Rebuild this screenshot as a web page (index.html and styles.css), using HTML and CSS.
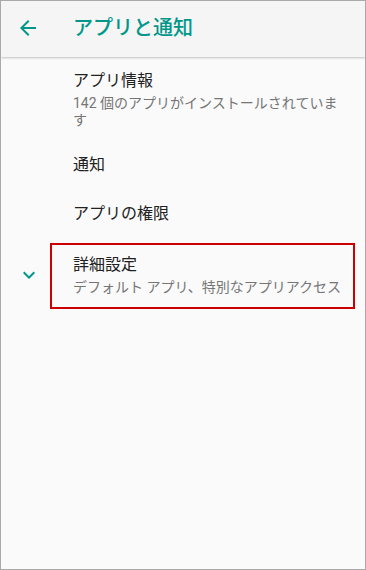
FILE: index.html
```html
<!DOCTYPE html>
<html lang="ja">
<head>
<meta charset="utf-8">
<title>アプリと通知</title>
<link rel="stylesheet" href="styles.css">
</head>
<body>
<div class="screen">
  <header class="appbar">
    <div class="nav-icon">
      <svg viewBox="0 0 24 24" width="24" height="24"><path d="M20 11H7.83l5.59-5.59L12 4l-8 8 8 8 1.41-1.41L7.83 13H20v-2z"/></svg>
    </div>
    <h1 class="appbar-title">アプリと通知</h1>
  </header>
  <ul class="list">
    <li class="item item-two">
      <div class="item-icon"></div>
      <div class="item-text">
        <div class="item-title">アプリ情報</div>
        <div class="item-sub">142 個のアプリがインストールされています</div>
      </div>
    </li>
    <li class="item">
      <div class="item-icon"></div>
      <div class="item-text">
        <div class="item-title">通知</div>
      </div>
    </li>
    <li class="item">
      <div class="item-icon"></div>
      <div class="item-text">
        <div class="item-title">アプリの権限</div>
      </div>
    </li>
    <li class="item item-adv">
      <div class="item-icon">
        <svg viewBox="0 0 24 24" width="24" height="24"><path d="M16.59 8.59L12 13.17 7.41 8.59 6 10l6 6 6-6z"/></svg>
      </div>
      <div class="item-text">
        <div class="item-title">詳細設定</div>
        <div class="item-sub">デフォルト アプリ、特別なアプリアクセス</div>
      </div>
      <div class="highlight"></div>
    </li>
  </ul>
</div>
</body>
</html>
```
FILE: styles.css
```css
* { box-sizing: border-box; }
html, body { margin: 0; padding: 0; }
body {
  font-family: Roboto, "Noto Sans CJK JP", sans-serif;
  background: #fafafa;
}
.screen {
  width: 366px;
  height: 570px;
  border: 1px solid #a9a9a9;
  background: #fafafa;
  overflow: hidden;
}
.appbar {
  height: 56px;
  background: #f5f5f5;
  display: flex;
  align-items: center;
  box-shadow: 0 1px 2px rgba(0,0,0,0.22);
  position: relative;
}
.nav-icon {
  width: 72px;
  padding-left: 15px;
  display: flex;
  align-items: center;
  height: 24px;
  margin-top: -2px;
}
.nav-icon svg { fill: #00978a; display: block; }
.appbar-title {
  margin: 0;
  font-size: 20px;
  font-weight: 500;
  color: #00978a;
  line-height: 24px;
  margin-top: -2px;
}
.list {
  list-style: none;
  margin: 0;
  padding: 0;
}
.item {
  display: flex;
  align-items: center;
  padding: 12px 17px 13px 0;
  position: relative;
}
.item-two { padding-bottom: 12px; }
.item-adv { padding-top: 14px; padding-bottom: 14px; }
.item-icon {
  width: 72px;
  flex: none;
  padding-left: 16px;
  display: flex;
  align-items: center;
}
.item-icon svg { fill: #00978a; display: block; }
.item-text { flex: 1; min-width: 0; }
.item-title {
  font-size: 16px;
  line-height: 24px;
  color: #212121;
}
.item-sub {
  margin-top: 2px;
  font-size: 14px;
  line-height: 17px;
  color: #757575;
}
.highlight {
  position: absolute;
  top: 4px;
  left: 49px;
  width: 305px;
  height: 66px;
  border: 2px solid #cc0000;
  pointer-events: none;
}
```
